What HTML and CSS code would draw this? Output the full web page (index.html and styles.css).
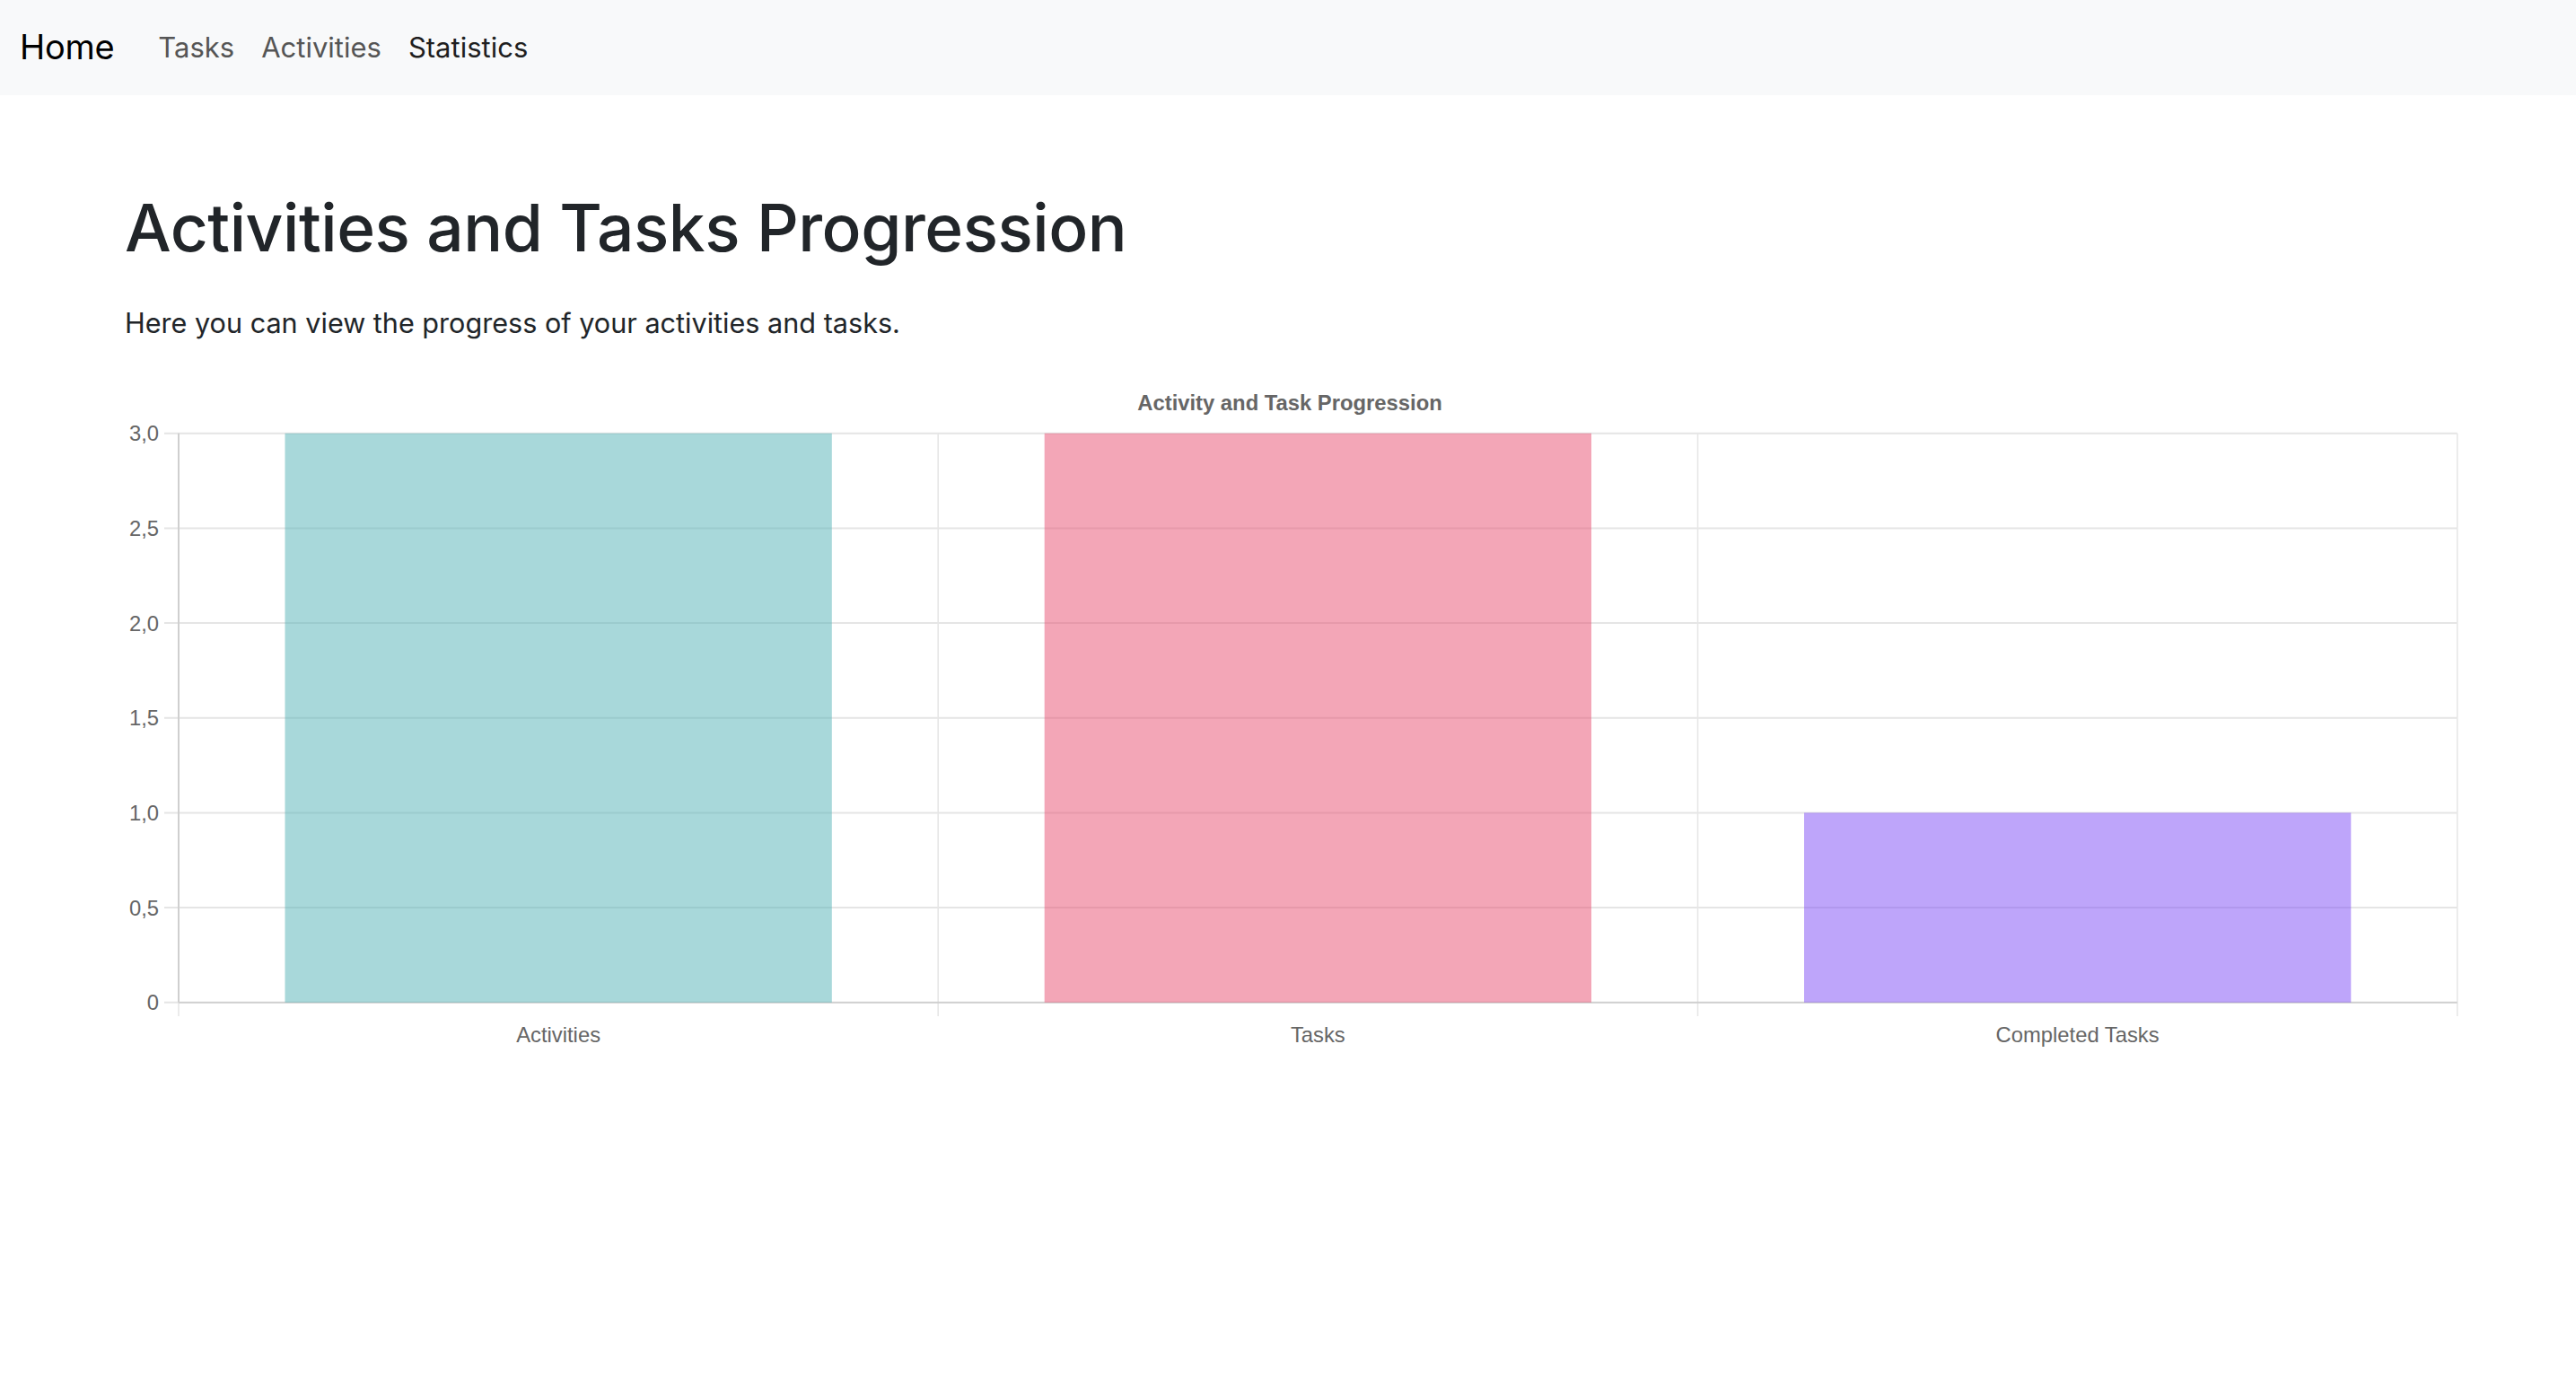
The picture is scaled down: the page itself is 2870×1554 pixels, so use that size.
FILE: index.html
```html
<!DOCTYPE html>
<html lang="en">
<head>
<meta charset="utf-8">
<title>Statistics</title>
<link rel="stylesheet" href="styles.css">
</head>
<body>
<nav class="navbar">
  <a class="brand" href="#">Home</a>
  <ul class="nav-links">
    <li><a class="nav-link" href="#">Tasks</a></li>
    <li><a class="nav-link" href="#">Activities</a></li>
    <li><a class="nav-link active" href="#">Statistics</a></li>
  </ul>
</nav>
<main class="container">
  <h1 class="page-title">Activities and Tasks Progression</h1>
  <p class="lead-text">Here you can view the progress of your activities and tasks.</p>
  <div class="chart-wrap">
    <svg class="chart" width="2601" height="760" viewBox="139 420 2601 760" xmlns="http://www.w3.org/2000/svg">
      <text class="chart-title" x="1437" y="458" text-anchor="middle">Activity and Task Progression</text>
      <g class="grid">
        <line x1="183" y1="483.7" x2="2737.7" y2="483.7"/>
        <line x1="183" y1="589.4" x2="2737.7" y2="589.4"/>
        <line x1="183" y1="695" x2="2737.7" y2="695"/>
        <line x1="183" y1="800.7" x2="2737.7" y2="800.7"/>
        <line x1="183" y1="906.4" x2="2737.7" y2="906.4"/>
        <line x1="183" y1="1012" x2="2737.7" y2="1012"/>
        <line x1="183" y1="1117.7" x2="199" y2="1117.7"/>
      </g>
      <g class="vgrid">
        <line x1="199" y1="1117.7" x2="199" y2="1133"/>
        <line x1="1045.2" y1="483.7" x2="1045.2" y2="1133"/>
        <line x1="1891.5" y1="483.7" x2="1891.5" y2="1133"/>
        <line x1="2737.7" y1="483.7" x2="2737.7" y2="1133"/>
      </g>
      <g class="axis">
        <line x1="199" y1="483.7" x2="199" y2="1117.7"/>
        <line x1="199" y1="1117.7" x2="2737.7" y2="1117.7"/>
      </g>
      <rect class="bar bar-teal" x="317.5" y="483.7" width="609.3" height="634"/>
      <rect class="bar bar-pink" x="1163.7" y="483.7" width="609.3" height="634"/>
      <rect class="bar bar-purple" x="2010" y="906.4" width="609.3" height="211.3"/>
      <g class="ytick" text-anchor="end">
        <text x="177" y="483.7" dy="0.36em">3,0</text>
        <text x="177" y="589.4" dy="0.36em">2,5</text>
        <text x="177" y="695" dy="0.36em">2,0</text>
        <text x="177" y="800.7" dy="0.36em">1,5</text>
        <text x="177" y="906.4" dy="0.36em">1,0</text>
        <text x="177" y="1012" dy="0.36em">0,5</text>
        <text x="177" y="1117.7" dy="0.36em">0</text>
      </g>
      <g class="xtick" text-anchor="middle">
        <text x="622.1" y="1162">Activities</text>
        <text x="1468.3" y="1162">Tasks</text>
        <text x="2314.6" y="1162">Completed Tasks</text>
      </g>
    </svg>
  </div>
</main>
</body>
</html>
```
FILE: styles.css
```css
* { box-sizing: border-box; }
html, body { margin: 0; padding: 0; background: #fff; }
body {
  font-family: Inter, "Noto Sans", "Liberation Sans", sans-serif;
  color: #212529;
}
.navbar {
  display: flex;
  align-items: center;
  height: 106px;
  padding-left: 22px;
  padding-bottom: 2px;
  background: #f8f9fa;
}
.brand {
  font-size: 38px;
  color: #000;
  text-decoration: none;
  margin-right: 49px;
  letter-spacing: -0.3px;
}
.nav-links {
  display: flex;
  gap: 30px;
  list-style: none;
  margin: 0;
  padding: 0;
}
.nav-link {
  font-size: 31px;
  color: #555;
  text-decoration: none;
  letter-spacing: 0;
}
.nav-link.active { color: #1f1f1f; }
.container {
  padding-left: 139px;
}
.page-title {
  margin: 0;
  padding-top: 104px;
  font-size: 73px;
  font-weight: 500;
  line-height: 1.2;
  letter-spacing: -0.5px;
  color: #212529;
}
.lead-text {
  margin: 39px 0 0;
  font-size: 30.6px;
  line-height: 1.5;
  letter-spacing: 0;
}
.chart-wrap {
  margin-top: 37px;
}
.chart { display: block; }
.chart text { font-family: "Liberation Sans", Arial, sans-serif; fill: #666; }
.chart-title { font-size: 23.8px; font-weight: bold; }
.ytick text, .xtick text { font-size: 23.8px; }
.grid line { stroke: #e5e5e5; stroke-width: 2; }
.vgrid line { stroke: #e6e6e6; stroke-width: 1.6; }
.axis line { stroke: #cfcfcf; stroke-width: 2; }
.bar-teal { fill: rgb(81, 177, 181); fill-opacity: 0.5; }
.bar-pink { fill: rgb(231, 77, 111); fill-opacity: 0.5; }
.bar-purple { fill: rgb(125, 75, 245); fill-opacity: 0.5; }
```
